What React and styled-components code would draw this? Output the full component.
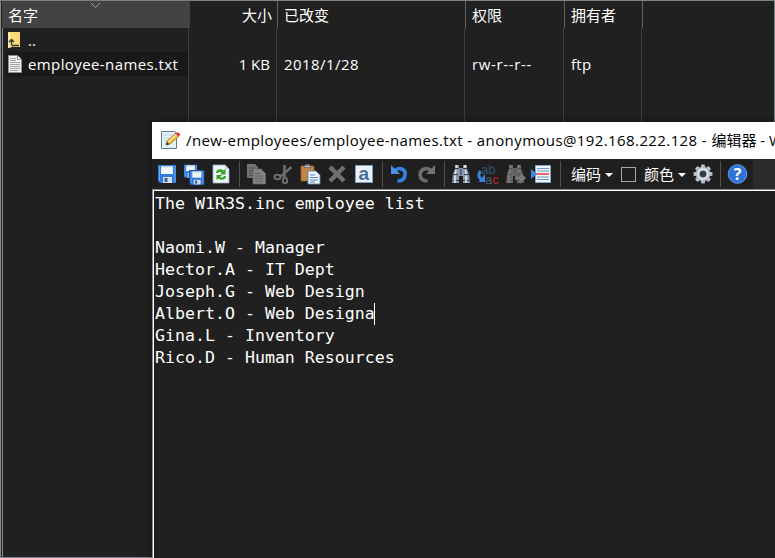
import React from "react";
import styled, { createGlobalStyle } from "styled-components";

const Global = createGlobalStyle`
  * { box-sizing: border-box; }
  body { margin: 0; background: #202020; overflow: hidden; }
`;

const Screen = styled.div`
  position: relative;
  width: 775px;
  height: 558px;
  overflow: hidden;
  background: #202020;
  color: #fff;
  font: 15px/20px "Open Sans", "Noto Sans CJK SC", sans-serif;
`;

const FilePanel = styled.div`
  display: flex;
  width: 775px;
  height: 558px;
  padding-left: 1px;
  border: 1px solid #7b7f86;
  border-left-color: #858b93;
`;

const List = styled.div`
  flex: 1;
  display: grid;
  grid-template-columns: 188px 88px 188px 99px 78px 1fr;
  grid-template-rows: 27px 1fr;
`;

const HeaderCell = styled.div`
  display: flex;
  align-items: center;
  justify-content: ${(p) => (p.$right ? "flex-end" : "flex-start")};
  position: relative;
  padding: 0 5px 0 6px;
  background: ${(p) => (p.$sorted ? "#434343" : "transparent")};
  border-right: 1px solid ${(p) => (p.$last ? "transparent" : p.$sorted ? "#434343" : "#646464")};
`;

const SortMark = styled.svg`
  position: absolute;
  left: 88px;
  top: 1px;
`;

const Column = styled.div`
  display: flex;
  flex-direction: column;
  border-right: 1px solid ${(p) => (p.$last ? "transparent" : "#3b3f46")};
  border-left: ${(p) => (p.$first ? "1px solid #858b93" : "0")};
  margin-left: ${(p) => (p.$first ? "0" : "-1px")};
  margin-right: ${(p) => (p.$last ? "0" : "1px")};
`;

const Cell = styled.div`
  display: flex;
  align-items: center;
  justify-content: ${(p) => (p.$right ? "flex-end" : "flex-start")};
  height: 24px;
  margin-left: ${(p) => (p.$name ? "3px" : "0")};
  padding: 0 6px 0 ${(p) => (p.$name ? "1px" : "7px")};
  gap: 1px;
  background: ${(p) => (p.$focus ? "#191919" : "transparent")};
  letter-spacing: ${(p) => p.$ls || "0"};
  white-space: pre;
`;

const Editor = styled.div`
  position: absolute;
  left: 152px;
  top: 122px;
  width: 623px;
  height: 436px;
  display: flex;
  flex-direction: column;
  box-shadow: 0 0 8px rgba(0, 0, 0, 0.45);
`;

const TitleBar = styled.div`
  display: flex;
  align-items: center;
  height: 37px;
  padding: 0 0 2px 8px;
  gap: 6px;
  overflow: hidden;
  background: #fff;
  color: #000;
  white-space: pre;
`;

const TitleText = styled.span`
  letter-spacing: ${(p) => p.$ls || "0"};
  margin-left: ${(p) => (p.$join ? "-6px" : "0")};
`;

const ToolStrip = styled.div`
  display: flex;
  height: 30px;
  background: #2b2b2b;
`;

const Tools = styled.div`
  display: flex;
  align-items: center;
  gap: 7px;
  width: 601px;
  padding-left: 6px;
  background: #1f1f1f;
`;

const Icon = styled.svg`
  flex: none;
  width: 20px;
  height: 20px;
  overflow: visible;
`;

const Divider = styled.div`
  flex: none;
  width: 1px;
  height: 26px;
  background: #505050;
`;

const Menu = styled.div`
  display: flex;
  flex: none;
  align-items: center;
  width: ${(p) => p.$w}px;
  padding-left: ${(p) => p.$pad}px;
  gap: 4px;
`;

const Arrow = styled.span`
  border: 4px solid transparent;
  border-top-color: #fff;
  border-bottom: 0;
  margin-top: 2px;
`;

const CheckBox = styled.span`
  width: 15px;
  height: 15px;
  margin-right: 4px;
  border: 1px solid #a8a8a8;
`;

const TextFrame = styled.div`
  flex: 1;
  display: flex;
  border-top: 1px solid #8a8a8e;
  border-left: 1px solid #8a8a8e;
`;

const TextArea = styled.div`
  flex: 1;
  border-top: 1px solid #fff;
  border-left: 1px solid #fff;
  background: #202020;
  padding: 2px 0 0 1px;
  font: 16.6px/22px "DejaVu Sans Mono", monospace;
  white-space: pre;
`;

const Line = styled.div`
  display: flex;
  height: 22px;
`;

const Caret = styled.span`
  width: 1px;
  height: 22px;
  margin-left: -1px;
  background: #fff;
`;

const FolderUp = () => (
  <Icon viewBox="0 0 20 20">
    <path d="M1 2h12v15H5l-3 1H1z" fill="#f9d978" />
    <path d="M1 2l3 2v13l-3 1z" fill="#ffe9a2" />
    <path d="M4.500 15V10M2 12l2.500-2.500L7 12M4.500 15.500H12" stroke="#343434" strokeWidth="1.400" fill="none" />
  </Icon>
);

const TextFile = () => (
  <Icon viewBox="0 0 20 20">
    <path d="M1.500 1.500h9l4 4v13h-13z" fill="#f1f1f1" stroke="#8d8d8d" />
    <path d="M10.500 1.500v4h4" fill="#fff" stroke="#8d8d8d" />
    <path d="M3 4.500h6M3 6.500h6M3 8.500h10M3 10.500h10M3 12.500h10M3 14.500h10M3 16.500h8" stroke="#999" strokeWidth=".9" />
  </Icon>
);

const Disk = () => (
  <>
    <path d="M0 1h18v18H2l-2-2z" fill="#327bdc" />
    <path d="M1 2h1v15l-1-1zM16.500 2h1v16h-1z" fill="#69a9f5" />
    <path d="M3 2h12v8H3z" fill="#f3f8fd" />
    <path d="M3 2h12v1.500H3z" fill="#c2d6ee" />
    <path d="M5 13h9v6H5z" fill="#d9dfe8" />
    <path d="M6.500 14h3v4h-3z" fill="#2a62b5" />
  </>
);

const Binoculars = ({ c, hi, lo }) => (
  <>
    <path d="M3 1h4v3h4V1h4v4l2 5 1 9h-7v-7H7v7H0l1-9 2-5z" fill={c} />
    <path d="M3 4.500h4M11 4.500h4M1 10.500h5M12 10.500h5M.5 16.500H7M11 16.500h6.500M9 5v6" stroke={lo} strokeWidth="1.200" />
    <path d="M4.500 1v3M13 1v3M4 6L3 10M13.500 6l.5 4M3 11.500V19M14 11.500V19" stroke={hi} strokeWidth="1.700" />
  </>
);

const GearIcon = () => (
  <Icon viewBox="0 0 20 20">
    {[0, 45, 90, 135].map((a) => (
      <rect key={a} x="8" y="0.500" width="4" height="19" rx="1" fill="#b6bec9" transform={`rotate(${a} 10 10)`} />
    ))}
    <circle cx="10" cy="10" r="7.300" fill="#b6bec9" />
    <circle cx="10" cy="10" r="5" fill="none" stroke="#e1e6ed" strokeWidth="1.500" />
    <circle cx="10" cy="10" r="3.300" fill="#343b45" />
  </Icon>
);

export default function App() {
  return (
    <Screen>
      <Global />
      <FilePanel>
        <List>
          <HeaderCell $sorted>
            名字
            <SortMark width="11" height="7" viewBox="0 0 11 7">
              <path d="M1 1l4.500 4.500L10 1" fill="none" stroke="#a0a0a0" />
            </SortMark>
          </HeaderCell>
          <HeaderCell $right>大小</HeaderCell>
          <HeaderCell>已改变</HeaderCell>
          <HeaderCell>权限</HeaderCell>
          <HeaderCell>拥有者</HeaderCell>
          <HeaderCell $last />
          <Column $first>
            <Cell $name><FolderUp />..</Cell>
            <Cell $name $focus $ls="0.4px"><TextFile />employee-names.txt</Cell>
          </Column>
          <Column>
            <Cell />
            <Cell $right>1 KB</Cell>
          </Column>
          <Column>
            <Cell />
            <Cell $ls="0.45px">2018/1/28</Cell>
          </Column>
          <Column>
            <Cell />
            <Cell $ls="0.65px">rw-r--r--</Cell>
          </Column>
          <Column>
            <Cell />
            <Cell $ls="0.3px">ftp</Cell>
          </Column>
          <Column $last />
        </List>
      </FilePanel>

      <Editor>
        <TitleBar>
          <Icon viewBox="0 0 20 20">
            <path d="M1.500 1.500h13l2 2v15h-15z" fill="#e4f0f7" stroke="#64788c" />
            <path d="M3 5h9M3 8h7M3 11h5" stroke="#c1d5e2" />
            <path d="M6 15l1-4 9-8 3 3-9 8z" fill="#f4c33c" stroke="#8c6b25" strokeWidth=".8" />
            <path d="M8 12l9-8" stroke="#ffe99a" strokeWidth="1.200" />
            <path d="M6 15l1-3 2.500 2.200z" fill="#333" />
            <path d="M15.500 3.500l2-1.500 3 2.500-2 2z" fill="#d93243" />
          </Icon>
          <TitleText $ls="0.4px">/new-employees/employee-names.txt - anonymous@192.168.222.128 - </TitleText>
          <TitleText $join>编辑器 - W</TitleText>
        </TitleBar>
        <ToolStrip>
          <Tools>
            <Icon viewBox="0 0 20 20"><Disk /></Icon>
            <Icon viewBox="0 0 20 20">
              <g transform="translate(-1 0) scale(.72)"><Disk /></g>
              <g transform="translate(5 6) scale(.76)"><path d="M-1 0h20v20H-1z" fill="#1d437b" /><Disk /></g>
            </Icon>
            <Icon viewBox="0 0 20 20">
              <path d="M1 1h12l4 4v14H1z" fill="#edf4fa" stroke="#9eb4c9" strokeWidth=".8" />
              <path d="M13 1v4h4" fill="#c6d6e5" />
              <path d="M4 9c0-4 5-5 7.500-2.500L13.500 5v5.500H8l1.700-2C8 7.500 6.500 8 6 9zM14 12c0 4-5 5-7.500 2.500L4.500 16v-5h5.500l-1.800 2c1.500 1 3.300.5 3.800-1z" fill="#36a51d" />
            </Icon>
            <Divider />
            <Icon viewBox="0 0 20 20">
              <path d="M0 0h8l3 3v11H0z" fill="#737373" />
              <path d="M2 4h6M2 6.500h7M2 9h7M2 11.500h4" stroke="#505050" />
              <path d="M6 5h8l4.500 4.500V20H6z" fill="#858585" stroke="#666" strokeWidth=".7" />
              <path d="M8 9.500h5M8 12h8M8 14.500h8M8 17h8" stroke="#626262" />
            </Icon>
            <Icon viewBox="0 0 20 20" fill="none" stroke="#6c6c6c">
              <path d="M10.500 1v12M17.500 3L6 13" strokeWidth="2.600" />
              <ellipse cx="3.500" cy="13" rx="3" ry="2.200" strokeWidth="2" />
              <ellipse cx="11" cy="16.500" rx="2.200" ry="2.800" strokeWidth="2" />
            </Icon>
            <Icon viewBox="0 0 20 20">
              <path d="M0 2h13v15H0z" fill="#c18443" stroke="#99602a" strokeWidth=".8" />
              <path d="M3 2l2-2h3l2 2v2H3z" fill="#6f7480" />
              <path d="M4 2.500h5" stroke="#c9ced5" />
              <path d="M7 7h8l4 4v9H7z" fill="#f0f6fc" stroke="#5883b5" strokeWidth=".9" />
              <path d="M9 11h5M9 13.500h8M9 16h8M9 18h5" stroke="#5686bd" />
            </Icon>
            <Icon viewBox="0 0 20 20"><path d="M2 3l14 14M16 3L2 17" stroke="#707070" strokeWidth="4.400" /></Icon>
            <Icon viewBox="0 0 20 20">
              <rect x=".5" y="1.500" width="17" height="17" fill="#e9f1f7" stroke="#7ba2c4" />
              <text x="3.500" y="16" fontFamily="Liberation Sans" fontSize="19" fontWeight="bold" fill="#476b98">a</text>
            </Icon>
            <Divider />
            <Icon viewBox="0 0 20 20">
              <path d="M5 6.500C9 2.500 16 5 15 11c-.5 4-3.500 6-7.500 6" fill="none" stroke="#3683df" strokeWidth="3.600" />
              <path d="M1 1v9h9z" fill="#4592e9" />
            </Icon>
            <Icon viewBox="0 0 20 20">
              <path d="M14 6.500C10 2.500 3 5 3 11c.5 4 3.500 6 7.500 6" fill="none" stroke="#6d6d6d" strokeWidth="3.600" />
              <path d="M18 1v9H9z" fill="#747474" />
            </Icon>
            <Divider />
            <Icon viewBox="0 0 20 20"><Binoculars c="#8b99ac" hi="#dae3ec" lo="#35404f" /></Icon>
            <Icon viewBox="0 0 20 20">
              <text x="2" y="10" fontFamily="Liberation Sans" fontSize="13" fill="#365173">ab</text>
              <text x="6" y="20" fontFamily="Liberation Sans" fontSize="13" fill="#4b5969">a<tspan fill="#c41e28">c</tspan></text>
              <path d="M1.500 7c-2.500 3-2 7 1 8" fill="none" stroke="#3783d8" strokeWidth="3" />
              <path d="M6 10v8H-.5z" fill="#3783d8" />
            </Icon>
            <Icon viewBox="0 0 20 20">
              <Binoculars c="#686868" hi="#7d7d7d" lo="#545454" />
              <path d="M9 12h5V8l6 6-6 6v-4H9z" fill="#7a7a7a" stroke="#4b4b4b" strokeWidth=".6" />
            </Icon>
            <Icon viewBox="0 0 20 20">
              <path d="M3.500 1.500h15v17h-15z" fill="#eff5fb" stroke="#86a8cb" transform="translate(-1 0)" />
              <path d="M4 4.500h12M4 7h12M4 13h12M4 15.500h12" stroke="#719acb" />
              <path d="M3 10h13" stroke="#f02b2c" strokeWidth="1.400" />
              <path d="M-2 5v10l6-5z" fill="#3c8ae7" />
            </Icon>
            <Divider />
            <Menu $w={45} $pad={3}>编码<Arrow /></Menu>
            <Menu $w={66} $pad={1}><CheckBox />颜色<Arrow /></Menu>
            <GearIcon />
            <Divider />
            <Icon viewBox="0 0 20 20">
              <circle cx="9.500" cy="10" r="9.300" fill="#2d74d6" stroke="#5c9df0" />
              <text x="9.500" y="16" textAnchor="middle" fontFamily="Open Sans" fontSize="16" fontWeight="bold" fill="#fff">?</text>
            </Icon>
          </Tools>
        </ToolStrip>
        <TextFrame>
          <TextArea>
            <Line>The W1R3S.inc employee list</Line>
            <Line />
            <Line>Naomi.W - Manager</Line>
            <Line>Hector.A - IT Dept</Line>
            <Line>Joseph.G - Web Design</Line>
            <Line>Albert.O - Web Designa<Caret /></Line>
            <Line>Gina.L - Inventory</Line>
            <Line>Rico.D - Human Resources</Line>
          </TextArea>
        </TextFrame>
      </Editor>
    </Screen>
  );
}
